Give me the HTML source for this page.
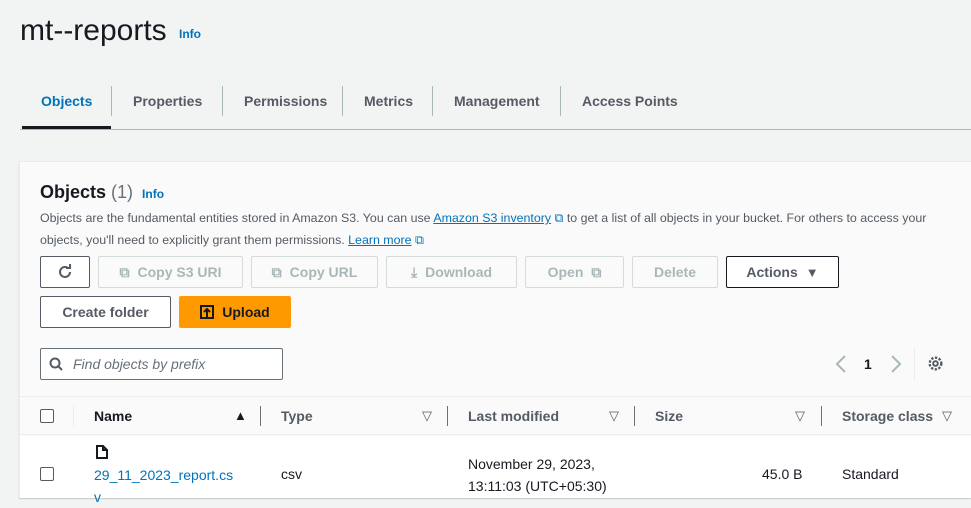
<!DOCTYPE html>
<html><head><meta charset="utf-8"><style>
*{box-sizing:border-box;margin:0;padding:0}
body{width:971px;height:498px;overflow:hidden;background:#f2f3f3;font-family:"Liberation Sans",sans-serif;color:#16191f;position:relative}
.a{position:absolute;white-space:nowrap}
h1{position:absolute;left:20px;top:14px;font-size:30px;font-weight:400;color:#16191f}
.info{color:#0073bb;font-weight:700;font-size:12px}
.tab{position:absolute;top:93px;font-size:14px;font-weight:700;color:#545b64}
.sep{position:absolute;top:86px;width:1px;height:30px;background:#aab7b8}
.panel{position:absolute;left:19px;top:161px;width:952px;height:337px;background:#fafafa;border:1px solid #eaeded;border-right:none;box-shadow:0 1px 1px rgba(0,28,36,.2)}
.btn{position:absolute;height:32px;border:1px solid #d5dbdb;border-radius:2px;background:#fafafa;color:#aab7b8;font-weight:700;font-size:14px;display:flex;align-items:center;justify-content:center;gap:8px}
.btn.en{border-color:#545b64;color:#545b64;background:#fff}
.th{position:absolute;top:408px;font-size:14px;font-weight:700;color:#545b64}
.vs{position:absolute;top:406px;width:1px;height:20px;background:#687078}
.cb{position:absolute;width:14px;height:14px;border:1px solid #545b64;border-radius:2px;background:#fff}
.tri{position:absolute;font-size:13px;color:#545b64}
</style></head><body>
<h1>mt--reports <span class="info" style="position:relative;top:-2px;left:4px">Info</span></h1>
<div class="tab" style="left:41px;color:#0073bb">Objects</div>
<div class="sep" style="left:111px"></div>
<div class="tab" style="left:133px">Properties</div>
<div class="sep" style="left:222px"></div>
<div class="tab" style="left:244px">Permissions</div>
<div class="sep" style="left:342px"></div>
<div class="tab" style="left:364px">Metrics</div>
<div class="sep" style="left:432px"></div>
<div class="tab" style="left:454px">Management</div>
<div class="sep" style="left:560px"></div>
<div class="tab" style="left:582px">Access Points</div>
<div class="a" style="left:20px;top:129px;width:951px;height:1px;background:#aab7b8"></div>
<div class="a" style="left:22px;top:126px;width:89px;height:3px;background:#16191f"></div>

<div class="panel"></div>
<div class="a" style="left:40px;top:182px;font-size:18px;font-weight:700">Objects <span style="font-weight:400;color:#687078">(1)</span> <span class="info" style="margin-left:4px">Info</span></div>
<div class="a" style="left:40px;top:207px;font-size:12.4px;color:#545b64;line-height:22px">Objects are the fundamental entities stored in Amazon S3. You can use <span style="color:#0073bb;text-decoration:underline">Amazon S3 inventory</span> <span style="color:#0073bb">⧉</span> to get a list of all objects in your bucket. For others to access your<br>objects, you'll need to explicitly grant them permissions. <span style="color:#0073bb;text-decoration:underline">Learn more</span> <span style="color:#0073bb">⧉</span></div>

<div class="btn en" style="left:40px;top:256px;width:50px"><svg width="18" height="18" viewBox="0 0 18 18"><path d="M14 9a5 5 0 1 1-1.5-3.6" fill="none" stroke="#545b64" stroke-width="2"/><path d="M10 5h4V1" fill="none" stroke="#545b64" stroke-width="2"/></svg></div>
<div class="btn" style="left:98px;top:256px;width:145px"><span>⧉</span>Copy S3 URI</div>
<div class="btn" style="left:251px;top:256px;width:127px"><span>⧉</span>Copy URL</div>
<div class="btn" style="left:386px;top:256px;width:131px"><span>⤓</span>Download</div>
<div class="btn" style="left:525px;top:256px;width:99px">Open <span>⧉</span></div>
<div class="btn" style="left:632px;top:256px;width:86px">Delete</div>
<div class="btn en" style="left:726px;top:256px;width:113px;border-color:#16191f">Actions <span style="font-size:13px">▼</span></div>
<div class="btn en" style="left:40px;top:296px;width:131px">Create folder</div>
<div class="btn" style="left:179px;top:296px;width:112px;background:#ff9900;border-color:#ff9900;color:#16191f"><svg width="14" height="14" viewBox="0 0 14 14"><rect x="1" y="1" width="12" height="12" fill="none" stroke="#16191f" stroke-width="2"/><path d="M7 12V4M4 7l3-3 3 3" fill="none" stroke="#16191f" stroke-width="2"/></svg>Upload</div>

<div class="a" style="left:40px;top:348px;width:243px;height:32px;border:1px solid #687078;border-radius:2px;background:#fff"></div>
<svg class="a" style="left:49px;top:357px" width="14" height="14" viewBox="0 0 14 14"><circle cx="6" cy="6" r="4.5" fill="none" stroke="#545b64" stroke-width="2"/><path d="M9.5 9.5L13 13" stroke="#545b64" stroke-width="2"/></svg>
<div class="a" style="left:73px;top:356px;font-size:14px;font-style:italic;color:#687078">Find objects by prefix</div>
<svg class="a" style="left:835px;top:355px" width="12" height="18" viewBox="0 0 12 18"><path d="M10 1L2 9l8 8" fill="none" stroke="#aab7b8" stroke-width="2"/></svg>
<div class="a" style="left:864px;top:356px;font-size:14px;font-weight:700">1</div>
<svg class="a" style="left:890px;top:355px" width="12" height="18" viewBox="0 0 12 18"><path d="M2 1l8 8-8 8" fill="none" stroke="#aab7b8" stroke-width="2"/></svg>
<div class="a" style="left:914px;top:348px;width:1px;height:32px;background:#eaeded"></div>
<svg class="a" style="left:927px;top:355px" width="17" height="17" viewBox="0 0 16 16"><circle cx="8" cy="8" r="2.2" fill="none" stroke="#545b64" stroke-width="1.8"/><circle cx="8" cy="8" r="5.5" fill="none" stroke="#545b64" stroke-width="2.2" stroke-dasharray="2.2 1.4"/></svg>

<div class="a" style="left:20px;top:396px;width:951px;height:39px;background:#fafafa;border-top:1px solid #eaeded;border-bottom:1px solid #eaeded"></div>
<div class="cb" style="left:40px;top:409px"></div>
<div class="a" style="left:73px;top:406px;width:1px;height:20px;background:#eaeded"></div>
<div class="th" style="left:94px;color:#16191f">Name</div><div class="tri" style="left:234px;top:408px;color:#16191f">▲</div>
<div class="vs" style="left:260px"></div>
<div class="th" style="left:281px">Type</div><div class="tri" style="left:422px;top:408px">▽</div>
<div class="vs" style="left:447px"></div>
<div class="th" style="left:468px">Last modified</div><div class="tri" style="left:609px;top:408px">▽</div>
<div class="vs" style="left:634px"></div>
<div class="th" style="left:655px">Size</div><div class="tri" style="left:795px;top:408px">▽</div>
<div class="vs" style="left:821px"></div>
<div class="th" style="left:842px">Storage class</div><div class="tri" style="left:942px;top:408px">▽</div>
<div class="a" style="left:20px;top:436px;width:951px;height:62px;background:#fff"></div>
<div class="cb" style="left:40px;top:467px"></div>
<svg class="a" style="left:96px;top:445px" width="12" height="14" viewBox="0 0 12 14"><path d="M1 1h6l4 4v8H1z M7 1v4h4" fill="none" stroke="#16191f" stroke-width="2"/></svg>
<div class="a" style="left:94px;top:464px;font-size:14px;color:#0073bb;line-height:22px">29_11_2023_report.cs<br>v</div>
<div class="a" style="left:281px;top:466px;font-size:14px">csv</div>
<div class="a" style="left:468px;top:453px;font-size:14px;line-height:22px">November 29, 2023,<br>13:11:03 (UTC+05:30)</div>
<div class="a" style="left:762px;top:466px;font-size:14px">45.0 B</div>
<div class="a" style="left:842px;top:466px;font-size:14px">Standard</div>
</body></html>
